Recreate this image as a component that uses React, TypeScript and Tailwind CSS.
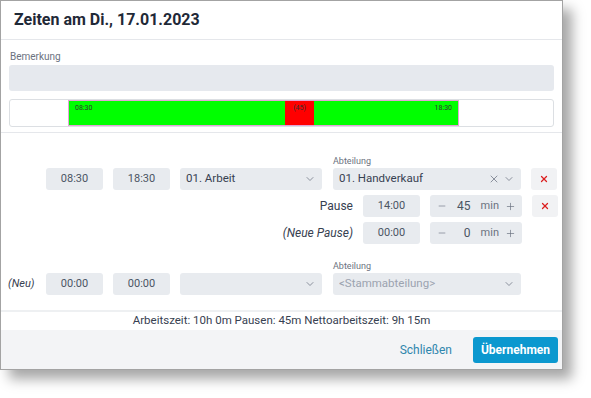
import { ChevronDown, X, Minus, Plus } from 'lucide-react';

const font = { fontFamily: 'Roboto, "Liberation Sans", sans-serif' };

function TimeBox({ value }: { value: string }) {
    return (
        <div className="w-[57px] h-[22px] rounded-[3px] bg-[#e8ebef] flex items-center justify-center text-[11px] text-[#4b5563]">
            {value}
        </div>
    );
}

function Select({ width, text, placeholder, clear }: { width: string; text?: string; placeholder?: boolean; clear?: boolean }) {
    return (
        <div className={`${width} h-[22px] rounded-[3px] bg-[#e8ebef] flex items-center pl-[6px] pr-[6px] text-[11.5px]`}>
            <span className={`flex-1 truncate ${placeholder ? 'text-[#9ca3af]' : 'text-[#374151]'}`}>{text}</span>
            {clear && <X size={12} strokeWidth={1.5} className="text-[#6b7280] mr-[3px]" />}
            <ChevronDown size={12} strokeWidth={1.5} className="text-[#6b7280]" />
        </div>
    );
}

function DeleteBtn() {
    return (
        <div className="w-[26px] h-[22px] rounded-[3px] bg-[#f1f2f4] flex items-center justify-center">
            <X size={10} strokeWidth={3} className="text-[#dc1f1f]" />
        </div>
    );
}

function Stepper({ value }: { value: string }) {
    return (
        <div className="w-[92px] h-[22px] rounded-[3px] bg-[#e8ebef] flex items-center px-[6px] text-[11px] text-[#6b7280]">
            <Minus size={10} strokeWidth={1.5} className="text-[#6b7280] ml-[1px]" />
            <span className="flex-1 text-right pr-[10px] text-[#4b5563] text-[12px]">{value}</span>
            <span className="mr-[6px]">min</span>
            <Plus size={11} strokeWidth={1.5} className="text-[#6b7280]" />
        </div>
    );
}

export default function App() {
    return (
        <div className="w-[591px] h-[398px] bg-white" style={font}>
            <div className="w-[563px] h-[370px] border border-[#a3a3a3] bg-white flex flex-col shadow-[9px_9px_12px_rgba(0,0,0,0.35)]">
                <div className="h-[39px] border-b border-[#e5e7eb] flex items-center px-[13px]">
                    <h1 className="text-[16px] font-bold text-[#1f2937]">Zeiten am Di., 17.01.2023</h1>
                </div>

                <div className="px-[8px] pt-[10px] pb-[5px] border-b border-[#e5e7eb]">
                    <div className="text-[10px] text-[#6b7280] leading-[13px] pl-[1px]">Bemerkung</div>
                    <div className="mt-[2px] h-[26px] rounded-[3px] bg-[#e6e9ee]" />
                    <div className="mt-[8px] h-[28px] rounded-[3px] border border-[#dcdfe3] flex">
                        <div className="w-[58px]" />
                        <div className="flex border border-[#e3a4d6]">
                            <div className="w-[216px] bg-[#00ff00] text-[7px] text-[#333] pl-[6px] pt-[2px]">08:30</div>
                            <div className="w-[29px] bg-[#ff0000] text-[7px] text-[#333] text-center pt-[2px]">(45)</div>
                            <div className="w-[144px] bg-[#00ff00] text-[7px] text-[#333] text-right pr-[6px] pt-[2px]">18:30</div>
                        </div>
                    </div>
                </div>

                <div className="flex-1 pt-[22px] text-[12px] text-[#374151]">
                    <div className="flex items-end pl-[45px]">
                        <TimeBox value="08:30" />
                        <div className="ml-[10px]"><TimeBox value="18:30" /></div>
                        <div className="ml-[10px]"><Select width="w-[142px]" text="01. Arbeit" /></div>
                        <div className="ml-[11px] flex flex-col">
                            <span className="text-[9px] text-[#6b7280] leading-[12px] mb-[1px]">Abteilung</span>
                            <Select width="w-[188px]" text="01. Handverkauf" clear />
                        </div>
                        <div className="ml-[10px]"><DeleteBtn /></div>
                    </div>

                    <div className="flex items-center justify-end pr-[4px] mt-[5px] gap-[10px]">
                        <span className="text-[12px] text-[#374151]">Pause</span>
                        <TimeBox value="14:00" />
                        <Stepper value="45" />
                        <DeleteBtn />
                    </div>

                    <div className="flex items-center justify-end pr-[4px] mt-[5px] gap-[10px]">
                        <span className="italic text-[12px] text-[#374151]">(Neue Pause)</span>
                        <TimeBox value="00:00" />
                        <Stepper value="0" />
                        <div className="w-[26px]" />
                    </div>

                    <div className="flex items-end mt-[16px]">
                        <span className="w-[45px] pl-[7px] italic text-[11px] text-[#374151] h-[22px] leading-[22px]">(Neu)</span>
                        <TimeBox value="00:00" />
                        <div className="ml-[10px]"><TimeBox value="00:00" /></div>
                        <div className="ml-[10px]"><Select width="w-[142px]" /></div>
                        <div className="ml-[11px] flex flex-col">
                            <span className="text-[9px] text-[#6b7280] leading-[12px] mb-[1px]">Abteilung</span>
                            <Select width="w-[188px]" text="<Stammabteilung>" placeholder />
                        </div>
                    </div>
                </div>

                <div className="h-[20px] border-t-2 border-[#eef0f2] flex items-center justify-center text-[11.5px] text-[#374151]">
                    Arbeitszeit: 10h 0m Pausen: 45m Nettoarbeitszeit: 9h 15m
                </div>

                <div className="h-[39px] bg-[#f3f4f6] flex items-center justify-end pr-[4px]">
                    <span className="text-[12px] text-[#2f86ad] mr-[21px]">Schließen</span>
                    <button className="h-[26px] w-[85px] rounded-[3px] bg-[#0b98cf] text-white text-[12px] font-bold">
                        Übernehmen
                    </button>
                </div>
            </div>
        </div>
    );
}
